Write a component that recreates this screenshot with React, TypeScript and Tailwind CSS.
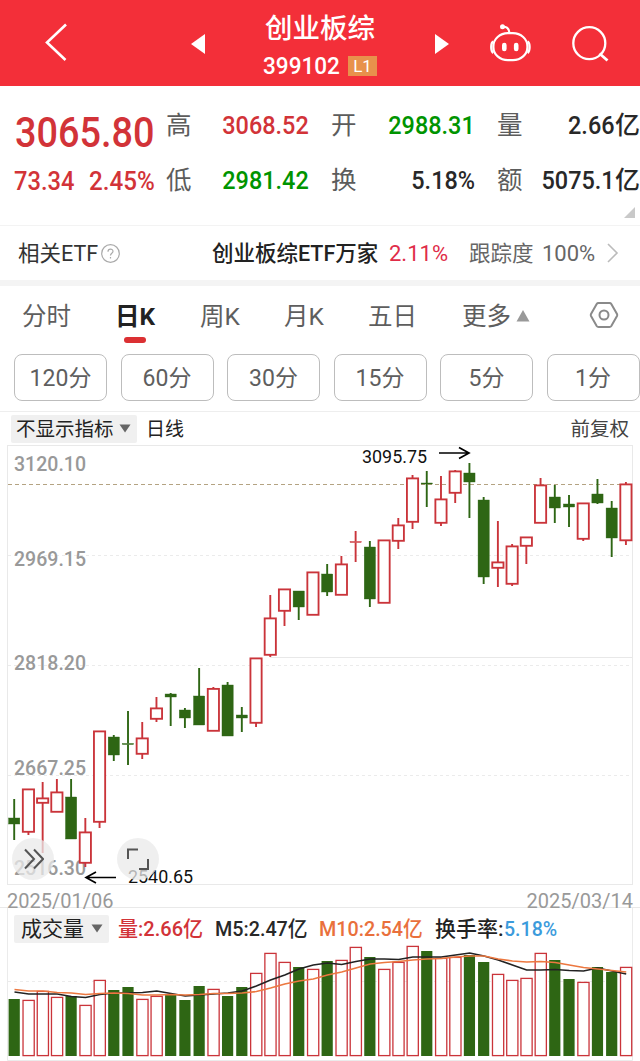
type Candle = [up: boolean, high: number, top: number, bottom: number, low: number, volume: number];

// y positions inside the 440px price panel, last value is the volume bar height
const candles: Candle[] = [
  [false, 354, 373, 379, 395, 57],
  [true, 344, 344, 387, 390, 56],
  [true, 337, 353, 358, 408, 65],
  [true, 334, 347, 367, 367, 59],
  [false, 334, 352, 394, 394, 60],
  [true, 373, 387, 418, 422, 51],
  [true, 286, 286, 377, 383, 76],
  [false, 290, 292, 310, 316, 66],
  [false, 266, 298.5, 299.5, 320, 69],
  [true, 277, 293, 309, 314, 57],
  [true, 252, 263, 274, 277, 60],
  [false, 248, 249, 252, 281, 61],
  [false, 263, 265, 273, 283, 56],
  [false, 223, 251, 280, 280, 70],
  [true, 242, 243.5, 286, 286, 67],
  [false, 237, 240, 291, 291, 60],
  [false, 262, 270, 273, 287, 69],
  [true, 213, 213, 278, 282, 83],
  [true, 150, 173, 210, 212, 103],
  [true, 144, 144, 166, 181, 94],
  [false, 146, 146, 162, 175, 89],
  [true, 127, 127, 170, 170, 87],
  [false, 119, 129, 147, 151, 95],
  [true, 111, 119, 150, 150, 96],
  [true, 86, 96.5, 97.5, 117, 109],
  [false, 96, 102, 154, 162, 99],
  [true, 95, 95, 158, 158, 87],
  [true, 73, 80, 96, 104, 94],
  [true, 30, 33, 77, 84, 110],
  [false, 26, 38, 39, 62, 105],
  [true, 31, 54, 78, 81, 98],
  [true, 25, 26, 48, 58, 99],
  [false, 18, 28, 37, 73, 101],
  [false, 52, 55, 132, 139, 94],
  [true, 76, 117, 123, 142, 82],
  [true, 99, 101, 139, 141, 76],
  [true, 92, 92, 101, 119, 78],
  [true, 33, 40, 78, 78, 103],
  [false, 40, 52, 63, 78, 96],
  [false, 50, 59, 62, 82, 77],
  [true, 58, 58, 94, 96, 74],
  [false, 34, 49, 58, 59, 89],
  [false, 56, 63, 93, 112, 84],
  [true, 37, 39, 95.5, 100, 89],
];

const ma5 = [
  43, 45, 45, 45, 47.5, 48.5, 45.5, 44, 44, 43.5, 42, 44.5, 47, 46, 45, 44, 42, 37, 31, 26, 20, 16, 14, 15.5, 12.5, 10,
  10, 10.5, 8, 8, 8, 6, 4, 7, 11, 16, 21, 21, 20.5, 21.5, 22, 19, 22, 25,
];
const ma10 = [
  40.5, 42, 42, 43.5, 44, 45.5, 44.5, 44, 44.5, 46, 46, 45.5, 46, 45.5, 44.5, 44.5, 44, 42.5, 39, 35, 32, 30, 26, 23, 19,
  15, 13.5, 12.5, 11, 10, 9.5, 8, 7, 7, 10, 12, 13, 12.5, 13.5, 16, 18.5, 20, 21.5, 23,
];

const RED = "#ca343a";
const GREEN = "#2e6614";
const cx = (i: number) => 14 + i * 14.226;
const toPoints = (values: number[]) => values.map((v, i) => `${cx(i) + 0.5},${v}`).join(" ");

const axis = [
  { y: 25.5, label: "3120.10" },
  { y: 120.5, label: "2969.15" },
  { y: 225, label: "2818.20" },
  { y: 330, label: "2667.25" },
  { y: 430, label: "2516.30" },
];

function Header() {
  return (
    <header className="flex h-[86px] items-start bg-[#f32f39] text-white">
      <svg className="ml-[44px] mt-[22px] shrink-0" width="24" height="40" fill="none" stroke="#fff" strokeWidth="2.6">
        <path d="M22 2.5 3 20.5 21.5 38" />
      </svg>
      <svg className="ml-[122px] mt-[33px] shrink-0" width="16" height="22" fill="#fff">
        <path d="M15 1v20L1 11z" />
      </svg>
      <div className="ml-[49px] w-[130px] pt-[11px] text-center">
        <div className="h-[36px] text-[27.5px] font-medium leading-[36px]">创业板综</div>
        <div className="mt-[7px] flex h-[24px] items-center pl-[8px]">
          <span className="w-[85px] origin-left scale-x-[.94] text-left text-[24px] font-medium leading-[24px]">399102</span>
          <span className="flex h-[20px] w-[29px] items-center justify-center bg-[#e8914c] text-[17px] leading-none">L1</span>
        </div>
      </div>
      <svg className="ml-[49px] mt-[33px] shrink-0" width="16" height="22" fill="#fff">
        <path d="M1 1v20L15 11z" />
      </svg>
      <svg className="ml-[39px] mt-[23px] shrink-0" width="43" height="41" fill="none" stroke="#fff" strokeWidth="2.2">
        <rect x="4.400" y="10.200" width="34" height="27" rx="14.500" ry="13" />
        <path d="M4.200 18.500C1.500 20 1.500 28 4.200 30M38.600 18.500c2.700 1.500 2.700 9.500 0 11.500" />
        <path d="M20.500 10C20 5.500 17.500 3.500 13.500 3.800" />
        <circle cx="13.500" cy="3.800" r="2.500" fill="#fff" stroke="none" />
        <path d="M15.300 22v4M27.200 22v4" strokeWidth="4.600" strokeLinecap="round" />
      </svg>
      <svg className="ml-[39px] mt-[25px] shrink-0" width="38" height="38" fill="none" stroke="#fff" strokeWidth="2.300">
        <circle cx="18.300" cy="18.200" r="16" />
        <path d="m28.500 28.500 8 7" strokeWidth="2.800" />
      </svg>
    </header>
  );
}

const stats = [
  { label: "高", value: "3068.52", color: "text-[#d23338]" },
  { label: "开", value: "2988.31", color: "text-[#009400]" },
  { label: "量", value: "2.66", unit: "亿", color: "text-[#282828]" },
  { label: "低", value: "2981.42", color: "text-[#009400]" },
  { label: "换", value: "5.18%", color: "text-[#282828]" },
  { label: "额", value: "5075.1", unit: "亿", color: "text-[#282828]" },
];

function Quote() {
  return (
    <section className="relative flex h-[140px] border-b border-[#f3f3f3] pt-[11px]">
      <div className="w-[165px] shrink-0 whitespace-nowrap pl-[14px] text-[#d23338]">
        <div className="mt-[12px] h-[48px] origin-left scale-x-[.89] pl-[1px] text-[42.500px] font-medium leading-[48px]">3065.80</div>
        <div className="mt-[9px] flex h-[30px] text-[26px] font-medium leading-[30px]">
          <span className="w-[74px] origin-left scale-x-[.91]">73.34</span>
          <span className="origin-left scale-x-[.93] pl-[1px]">2.45%</span>
        </div>
      </div>
      <div className="grid w-[475px] grid-cols-[144px_166px_165px] grid-rows-[55px_55px]">
        {stats.map((s, i) => (
          <div key={s.label} className={i % 3 === 0 ? "flex items-center justify-between pl-[1px]" : "flex items-center justify-between pl-[22px]"}>
            <span className="pt-[2px] text-[25.500px] leading-none text-[#5c5c5c]">{s.label}</span>
            <span className={`flex items-center whitespace-nowrap font-medium leading-none ${s.color}`}>
              <span className="origin-right scale-x-[.885] pt-[1px] text-[26.500px]">{s.value}</span>
              {s.unit && <span className="pt-[1px] text-[25px]">{s.unit}</span>}
            </span>
          </div>
        ))}
      </div>
      <svg className="absolute bottom-[7px] right-[5px]" width="11" height="11" fill="#c9c9c9">
        <path d="M11 0v11H0z" />
      </svg>
    </section>
  );
}

function EtfRow() {
  return (
    <section className="flex h-[60px] items-center whitespace-nowrap border-b-[6px] border-[#f4f4f4] pt-[2px] text-[21.500px] leading-none">
      <span className="ml-[18px] w-[83px] text-[#333]">相关ETF</span>
      <svg className="-mt-[2px]" width="19" height="19" fill="none" stroke="#aaa" strokeWidth="1.200">
        <circle cx="9.500" cy="9.500" r="8.800" />
        <path d="M7 7.700c0-3.500 5-3.300 5-.4 0 2-2.500 2-2.500 4.200M9.500 13v1.500" />
      </svg>
      <span className="ml-[92px] w-[177px] font-medium text-[#222]">创业板综ETF万家</span>
      <span className="w-[80px] text-[22px] text-[#e02c48]">2.11%</span>
      <span className="w-[73px] text-[#666]">跟踪度</span>
      <span className="w-[64px] text-[22px] text-[#666]">100%</span>
      <svg className="-mt-[2px]" width="13" height="20" fill="none" stroke="#bbb" strokeWidth="1.600">
        <path d="m2 1 9 9-9 9" />
      </svg>
    </section>
  );
}

const periods = ["120分", "60分", "30分", "15分", "5分", "1分"];

function Periods() {
  return (
    <section className="h-[126px] border-b border-[#eeeeee]">
      <nav className="flex h-[59px] items-center whitespace-nowrap pl-[22px] pt-[3px] text-[24.500px] leading-none text-[#5e5e5e]">
        <span className="w-[93px]">分时</span>
        <span className="flex w-[85px] flex-col pt-[14px]">
          <b className="font-bold text-[#222]">日K</b>
          <i className="ml-[9px] mt-[8px] h-[6px] w-[22px] rounded-full bg-[#db3033]" />
        </span>
        <span className="w-[84px]">周K</span>
        <span className="w-[84px]">月K</span>
        <span className="w-[94px]">五日</span>
        <span className="w-[54px]">更多</span>
        <svg className="-mt-[3px]" width="14" height="12" fill="#999">
          <path d="M7 0l6.500 11.500H.5z" />
        </svg>
        <svg className="-mt-[4px] ml-[59px]" width="30" height="28" fill="none" stroke="#8a8a8a" strokeWidth="2">
          <path d="M9.500 2h11q1.200 0 1.800 1L28 13q.5 1 0 2l-5.700 10q-.6 1-1.800 1h-11q-1.200 0-1.800-1L2 15q-.5-1 0-2L7.700 3q.6-1 1.800-1z" />
          <circle cx="15" cy="14" r="4.500" />
        </svg>
      </nav>
      <div className="flex gap-[13.500px] overflow-hidden pl-[14px] pt-[9px]">
        {periods.map((p) => (
          <button key={p} className="h-[47px] w-[93px] shrink-0 rounded-lg border border-[#bdbdbd] pt-[3px] text-[23px] text-[#5e5e5e]">
            {p}
          </button>
        ))}
      </div>
    </section>
  );
}

function Caret() {
  return (
    <svg className="-mt-[2px]" width="12" height="9" fill="#666">
      <path d="M.5.500h11L6 8.500z" />
    </svg>
  );
}

function PriceChart() {
  return (
    <div className="relative h-[440px]">
      <svg className="block overflow-visible" width="640" height="440">
        <rect x="7.500" y=".5" width="625" height="439" fill="none" stroke="#e9e9e9" />
        {[110.5, 220.5, 330.5].map((y) => (
          <path key={y} d={`M8 ${y}H632`} stroke="#ebebeb" strokeDasharray="3 3" />
        ))}
        <path d="M270 212.500H632" stroke="#e8e8e8" />
        <path d="M8 39.500H632" stroke="#b4a382" strokeDasharray="4 3" />
        {axis.map((a) => (
          <text key={a.label} x="14" y={a.y} fontSize="20" fontWeight="500" fill="#999" textLength="72" lengthAdjust="spacingAndGlyphs">
            {a.label}
          </text>
        ))}
        {candles.map(([up, high, top, bottom, low], i) => {
          const x = cx(i);
          const color = up ? RED : GREEN;
          return (
            <g key={i} stroke={color}>
              {high < top && <path d={`M${x + 0.2} ${high}V${top}`} strokeWidth="1.900" />}
              {low > bottom && <path d={`M${x + 0.2} ${bottom}V${low}`} strokeWidth="1.900" />}
              {up && bottom - top > 2 ? (
                <rect x={x - 5.4} y={top + 0.4} width="11.200" height={bottom - top - 0.6} fill="#fff" strokeWidth="1.850" />
              ) : (
                <rect x={x - 5.4} y={top} width="11.200" height={bottom - top} fill={color} strokeWidth=".4" />
              )}
            </g>
          );
        })}
        <g fontSize="18.500" fill="#111">
          <text x="362" y="18" textLength="65" lengthAdjust="spacingAndGlyphs">3095.75</text>
          <text x="128" y="438" textLength="65" lengthAdjust="spacingAndGlyphs">2540.65</text>
        </g>
        <path d="M439 8h30M459 2.500 469 8l-10 5.500M116 432.500H86M96 427l-10 5.500 10 5.500" fill="none" stroke="#000" strokeWidth="1.700" />
      </svg>
      <button className="absolute left-[12px] top-[393px] flex h-[42px] w-[42px] items-center justify-center rounded-full bg-[#e9e9e9]/75">
        <svg width="22" height="22" fill="none" stroke="#555" strokeWidth="2">
          <path d="m3 1.500 9 9.500-9 9.500M12 1.500l9 9.500-9 9.500" />
        </svg>
      </button>
      <button className="absolute left-[117px] top-[393px] flex h-[42px] w-[42px] items-center justify-center rounded-full bg-[#e9e9e9]/75">
        <svg width="22" height="22" fill="none" stroke="#555" strokeWidth="2">
          <path d="M1 11V1.500h10M12 21h9V11" />
        </svg>
      </button>
    </div>
  );
}

function VolumeChart() {
  return (
    <section className="border-t border-[#e9e9e9]">
      <div className="flex h-[41px] items-center whitespace-nowrap pt-[2px] text-[21px] font-medium leading-none">
        <span className="-mt-[2px] ml-[14px] flex h-[28px] w-[95px] items-center gap-[7px] rounded-[2px] bg-[#f0f0f0] pl-[7px] pt-[2px] font-normal text-[#222]">
          成交量
          <Caret />
        </span>
        <span className="ml-[9px] w-[97px] origin-left scale-x-[.955] text-[#d23338]">量:2.66亿</span>
        <span className="w-[104px] origin-left scale-x-[.94] text-[#282828]">M5:2.47亿</span>
        <span className="w-[116px] origin-left scale-x-[.94] text-[#e9703c]">M10:2.54亿</span>
        <span className="w-[69px] text-[#222]">换手率:</span>
        <span className="origin-left scale-x-[.93] text-[#3c9bdc]">5.18%</span>
      </div>
      <svg className="block overflow-visible" width="640" height="112">
        <path d="M7.500-41V111.500H632.500V-41" fill="none" stroke="#ebebeb" />
        <path d="M8 32.500H632" stroke="#ebebeb" strokeDasharray="3 3" />
        {candles.map(([up, , , , , volume], i) =>
          up ? (
            <rect key={i} x={cx(i) - 5.2} y={107.4 - volume} width="11.200" height={volume - 0.8} fill="#fff" stroke={RED} strokeWidth="1.300" />
          ) : (
            <rect key={i} x={cx(i) - 5.4} y={107 - volume} width="11.200" height={volume} fill={GREEN} />
          ),
        )}
        <polyline points={toPoints(ma5)} fill="none" stroke="#222" strokeWidth="1.600" />
        <polyline points={toPoints(ma10)} fill="none" stroke="#ec7840" strokeWidth="1.700" />
      </svg>
    </section>
  );
}

export default function App() {
  return (
    <main className="h-[1061px] w-[640px] overflow-hidden bg-white font-['Roboto','Noto_Sans_CJK_SC',sans-serif]">
      <Header />
      <Quote />
      <EtfRow />
      <Periods />
      <div className="flex h-[33px] items-center whitespace-nowrap pl-[11px] pr-[11px] text-[19.500px] leading-none text-[#222]">
        <span className="flex h-[28px] w-[126px] items-center gap-[5px] rounded-[2px] bg-[#f0f0f0] pl-[5px] pt-[2px]">
          不显示指标
          <Caret />
        </span>
        <span className="ml-[9px] pt-[2px] text-[19px]">日线</span>
        <span className="ml-auto pt-[2px] text-[#444]">前复权</span>
      </div>
      <PriceChart />
      <div className="flex h-[22px] items-center justify-between pl-[7px] pr-[7px] pt-[9px] text-[20px] leading-none text-[#999]">
        <span>2025/01/06</span>
        <span>2025/03/14</span>
      </div>
      <VolumeChart />
    </main>
  );
}
